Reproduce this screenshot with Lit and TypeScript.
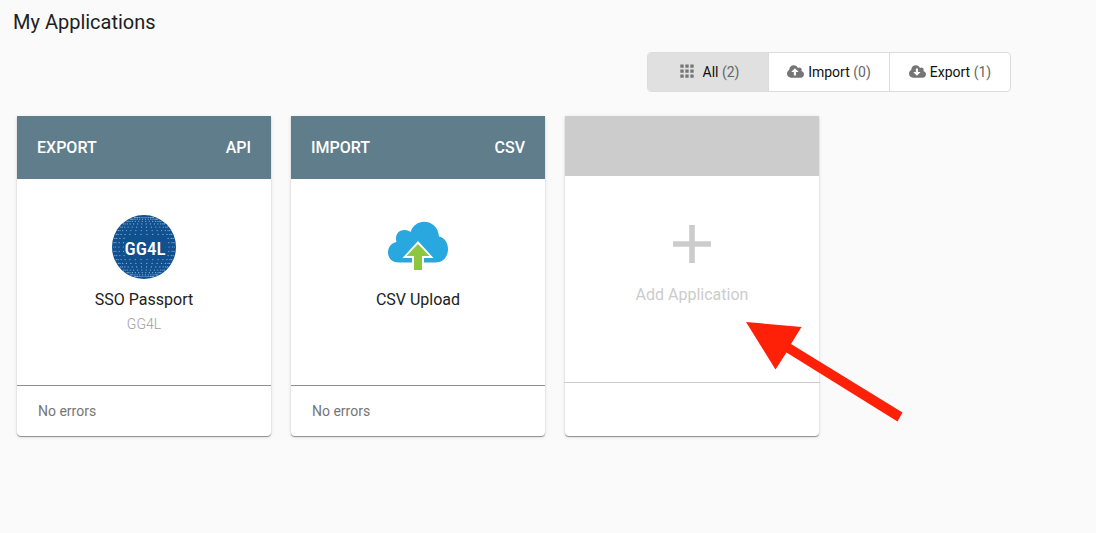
import { LitElement, html, svg, css, nothing } from "lit";
import { customElement, property, state } from "lit/decorators.js";
import { classMap } from "lit/directives/class-map.js";

type Kind = "all" | "import" | "export";

interface Application {
  kind: "import" | "export";
  channel: string;
  name: string;
  vendor: string;
  status: string;
  logo: "globe" | "cloud";
}

const applications: Application[] = [
  { kind: "export", channel: "API", name: "SSO Passport", vendor: "GG4L", status: "No errors", logo: "globe" },
  { kind: "import", channel: "CSV", name: "CSV Upload", vendor: "", status: "No errors", logo: "cloud" },
];

const filters: { kind: Kind; label: string; count: number }[] = [
  { kind: "all", label: "All", count: 2 },
  { kind: "import", label: "Import", count: 0 },
  { kind: "export", label: "Export", count: 1 },
];

const cloudOutline =
  "m640 288q0 159-112.5 271.5t-271.5 112.5h-1088q-185 0-316.5-131.5t-131.5-316.5q0-130 70-240t188-165q-2-30-2-43 0-212 150-362t362-150q156 0 285.5 87t188.5 231q71-62 166-62 106 0 181 75t75 181q0 76-41 138 130 31 213.5 135.5t83.5 238.5z";

const cloudUp =
  "M1280 864q0-14-9-23l-352-352q-9-9-23-9t-23 9l-351 351q-10 12-10 24 0 14 9 23t23 9h224v352q0 13 9.5 22.5t22.5 9.5h192q13 0 22.5-9.5t9.5-22.5v-352h224q13 0 22.5-9.5t9.5-22.5z" +
  cloudOutline;

const cloudDown =
  "M1280 928q0-14-9-23t-23-9h-224v-352q0-13-9.5-22.5t-22.5-9.5h-192q-13 0-22.5 9.5t-9.5 22.5v352h-224q-13 0-22.5 9.5t-9.5 22.5q0 14 9 23l352 352q9 9 23 9t23-9l351-351q10-12 10-24z" +
  cloudOutline.replace("m640 288", "m640 224");

const radians = (degrees: number) => (degrees * Math.PI) / 180;

// Dots spread over the visible half of a sphere, by latitude and longitude.
const globeDots: { x: number; y: number }[] = [];
for (let lat = -72; lat <= 72; lat += 8) {
  for (let lon = -78; lon <= 78; lon += 12) {
    globeDots.push({
      x: 32 + 31 * Math.cos(radians(lat)) * Math.sin(radians(lon)),
      y: 32 + 31 * Math.sin(radians(lat)),
    });
  }
}

@customElement("app-logo")
export class AppLogo extends LitElement {
  static styles = css`
    :host {
      display: block;
      height: 64px;
    }
    .logo {
      display: block;
    }
    .mark {
      font-family: "Liberation Sans Narrow", "Roboto Condensed", "Open Sans Condensed", Roboto, sans-serif;
      font-size: 19px;
      font-weight: 500;
    }
  `;

  @property() kind: "globe" | "cloud" = "globe";

  render() {
    return this.kind === "globe"
      ? html`<svg class="logo" width="64" height="64" viewBox="0 0 64 64" aria-hidden="true">
          <circle cx="32" cy="32" r="32" fill="#10508f" />
          ${globeDots.map((d) => svg`<circle cx=${d.x} cy=${d.y} r="0.6" fill="#8fb6dc" />`)}
          <rect x="13" y="21" width="40" height="23" fill="#10508f" />
          <text class="mark" x="33" y="40" text-anchor="middle" fill="#fff">GG4L</text>
        </svg>`
      : html`<svg class="logo" width="64" height="64" viewBox="0 0 64 64" aria-hidden="true">
          <path
            fill="#29a8e0"
            d="M13 47.500C6.500 47.500 2 43.500 2 37.500C2 32 5.500 28 10.500 27C8.500 20 12.500 15 18.500 15C21 15 23 15.800 24.500 17C27 10.500 32 6.800 38 6.800C46.500 6.800 52.500 13 53 21.500C58.500 22.500 62 27.500 62 34C62 42 57 47.500 49.500 47.500Z"
          />
          <path fill="#fff" d="M32 26L47.500 43H38V56H26V43H16.500Z" />
          <path fill="#8dc63f" d="M32 29L43.500 41H36V55H28V41H20.500Z" />
        </svg>`;
  }
}

@customElement("app-root")
export class AppRoot extends LitElement {
  static styles = css`
    :host {
      display: block;
      box-sizing: border-box;
      min-height: 100vh;
      padding: 10px 13px 24px;
      background: #fafafa;
      color: #212121;
      font-family: Roboto, "Liberation Sans", sans-serif;
      font-size: 16px;
    }
    .title {
      margin: 0 0 18px;
      font-size: 20px;
      font-weight: 400;
      line-height: 24px;
    }
    .toolbar {
      display: flex;
      justify-content: flex-end;
      margin: 0 72px 24px 0;
    }
    .filters {
      display: flex;
      box-sizing: border-box;
      height: 40px;
      border: 1px solid #dcdcdc;
      border-radius: 4px;
      overflow: hidden;
      background: #fff;
    }
    .filter {
      display: flex;
      align-items: center;
      justify-content: center;
      gap: 4px;
      box-sizing: content-box;
      width: 120px;
      padding: 0;
      border: 0;
      background: none;
      color: #212121;
      font: 400 14px/20px Roboto, "Liberation Sans", sans-serif;
      cursor: pointer;
    }
    .filter + .filter {
      border-left: 1px solid #dcdcdc;
    }
    .filter.selected {
      background: #e0e0e0;
    }
    .filter.grid {
      gap: 6px;
    }
    .icon {
      flex: none;
      fill: #757575;
    }
    .count {
      color: #666;
    }
    .label {
      color: #111;
    }
    .cards {
      display: flex;
      flex-wrap: wrap;
      gap: 20px;
      padding: 0 4px;
    }
    .card {
      position: relative;
      display: flex;
      flex-direction: column;
      width: 254px;
      min-height: 320px;
      border-radius: 0 0 4px 4px;
      background: #fff;
      box-shadow: 0 1px 1px rgba(0, 0, 0, 0.4), 0 1px 4px rgba(0, 0, 0, 0.1);
    }
    .head {
      display: flex;
      justify-content: space-between;
      padding: 20px;
      background: #607d8b;
      color: #fff;
      font-weight: 500;
      line-height: 23px;
      text-transform: uppercase;
    }
    .body {
      display: flex;
      flex: 1;
      flex-direction: column;
      align-items: center;
      padding-top: 36px;
    }
    .name {
      margin: 8px 0 0;
      font-size: 16px;
      font-weight: 400;
      line-height: 26px;
    }
    .vendor {
      margin: 0;
      color: #9e9e9e;
      font-size: 14px;
      font-weight: 300;
      line-height: 22px;
    }
    .foot {
      box-sizing: border-box;
      height: 51px;
      padding: 15px 21px;
      border-top: 1px solid #8e8e8e;
      color: #757575;
      font-size: 14px;
      line-height: 20px;
    }
    .blank {
      height: 60px;
      background: #ccc;
    }
    .add {
      display: flex;
      flex: 1;
      flex-direction: column;
      align-items: center;
      gap: 20px;
      padding: 49px 0 0;
      border: 0;
      background: none;
      color: #ccc;
      font: 400 16px/24px Roboto, "Liberation Sans", sans-serif;
      cursor: pointer;
    }
    .blankfoot {
      box-sizing: border-box;
      height: 54px;
      margin: 0 -1px;
      border-top: 1px solid #ccc;
    }
    .pointer {
      position: absolute;
      top: 206px;
      left: 181px;
      pointer-events: none;
    }
  `;

  @state() private filter: Kind = "all";

  private icon(kind: Kind) {
    if (kind === "all") {
      return html`<svg class="icon" width="20" height="20" viewBox="0 0 24 24" aria-hidden="true">
        <path
          d="M4 7h4V3H4v4zm6 12h4v-4h-4v4zm-6 0h4v-4H4v4zm0-6h4v-4H4v4zm6 0h4v-4h-4v4zm6-10v4h4V3h-4zm-6 4h4V3h-4v4zm6 6h4v-4h-4v4zm0 6h4v-4h-4v4z"
        />
      </svg>`;
    }
    return html`<svg class="icon" width="17" height="16" viewBox="0 0 1920 1792" aria-hidden="true">
      <path d=${kind === "import" ? cloudUp : cloudDown} />
    </svg>`;
  }

  private card(app: Application) {
    return html`<article class="card">
      <header class="head"><span>${app.kind}</span><span>${app.channel}</span></header>
      <div class="body">
        <app-logo kind=${app.logo}></app-logo>
        <h2 class="name">${app.name}</h2>
        ${app.vendor ? html`<p class="vendor">${app.vendor}</p>` : nothing}
      </div>
      <footer class="foot">${app.status}</footer>
    </article>`;
  }

  render() {
    const shown = applications.filter((a) => this.filter === "all" || a.kind === this.filter);
    return html`
      <h1 class="title">My Applications</h1>
      <div class="toolbar">
        <div class="filters" role="group" aria-label="Filter applications">
          ${filters.map(
            (f) => html`<button
              type="button"
              class=${classMap({ filter: true, selected: this.filter === f.kind, grid: f.kind === "all" })}
              aria-pressed=${this.filter === f.kind}
              @click=${() => (this.filter = f.kind)}
            >
              ${this.icon(f.kind)}
              <span class="label">${f.label} <span class="count">(${f.count})</span></span>
            </button>`
          )}
        </div>
      </div>
      <main class="cards">
        ${shown.map((a) => this.card(a))}
        <section class="card">
          <div class="blank"></div>
          <button type="button" class="add">
            <svg width="38" height="38" viewBox="0 0 38 38" aria-hidden="true">
              <path d="M16.200 0h5.600v16.200H38v5.600H21.800V38h-5.600V21.800H0v-5.600h16.200z" fill="#ccc" />
            </svg>
            Add Application
          </button>
          <div class="blankfoot"></div>
          <svg class="pointer" width="158" height="100" viewBox="0 0 158 100" aria-hidden="true">
            <path d="M0 0L55.500 5L45 22L156.500 90.500L151.500 99.500L40.500 30.500L29.500 47.500Z" fill="#ff2008" />
          </svg>
        </section>
      </main>
    `;
  }
}
